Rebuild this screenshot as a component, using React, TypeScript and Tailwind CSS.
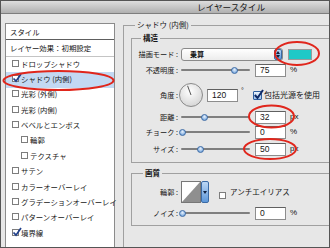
import React from "react";

const effects = [
  { id: 1, label: "ドロップシャドウ" },
  { id: 2, label: "シャドウ (内側)", checked: true, active: true },
  { id: 3, label: "光彩 (外側)" },
  { id: 4, label: "光彩 (内側)" },
  { id: 5, label: "ベベルとエンボス" },
  { id: 6, label: "輪郭", sub: true },
  { id: 7, label: "テクスチャ", sub: true },
  { id: 8, label: "サテン" },
  { id: 9, label: "カラーオーバーレイ" },
  { id: 10, label: "グラデーションオーバーレイ" },
  { id: 11, label: "パターンオーバーレイ" },
  { id: 12, label: "境界線", checked: true },
];

const Check = ({ on }: { on?: boolean }) => (
  <span className="relative inline-block w-[7px] h-[7px] shrink-0 border border-[#7d7d7d] bg-white">
    {on && (
      <svg className="absolute left-[-1px] top-[-3px]" width="10" height="10" viewBox="0 0 10 10">
        <path d="M1.5 5.5 L4 8.2 L9 1" fill="none" stroke="#1f3f8a" strokeWidth="1.7" />
      </svg>
    )}
  </span>
);

const Slider = ({ thumb }: { thumb: string }) => (
  <div className="relative ml-[3px] w-[69px] h-[8px] shrink-0 flex items-center">
    <div className="w-full h-[2px] rounded-full bg-[#7f7f7f]" />
    <div
      className={`absolute top-[0.5px] w-[7px] h-[7px] rounded-full border border-[#3d6ca6] bg-[radial-gradient(circle_at_50%_35%,#eaf3fd,#5a93d4)] ${thumb}`}
    />
  </div>
);

const Field = ({ v, className = "ml-[5px]" }: { v: string; className?: string }) => (
  <div
    className={`w-[31px] h-[13px] shrink-0 border border-[#8d8d8d] border-t-[#606060] bg-white pl-[4px] text-[8.5px] leading-[11px] font-['Liberation_Sans',sans-serif] ${className}`}
  >
    {v}
  </div>
);

const Label = ({ text }: { text: string }) => (
  <div className="w-[46px] shrink-0 text-right text-[7.2px] whitespace-nowrap">{text}</div>
);

const Unit = ({ text }: { text: string }) => (
  <div className="ml-[4px] text-[8px] font-['Liberation_Sans',sans-serif]">{text}</div>
);

const Stepper = ({ both }: { both?: boolean }) => (
  <div className="w-[8px] h-full shrink-0 rounded-[2px] border border-[#3a6aa5] bg-gradient-to-b from-[#bcd7f4] to-[#5d97d8] flex flex-col items-center justify-center gap-[1px]">
    {both && (
      <svg width="4" height="3" viewBox="0 0 4 3">
        <path d="M0 3 L2 0 L4 3Z" fill="#10213f" />
      </svg>
    )}
    <svg width="4" height="3" viewBox="0 0 4 3">
      <path d="M0 0 L2 3 L4 0Z" fill="#10213f" />
    </svg>
  </div>
);

export default function App() {
  return (
    <div className="relative w-[330px] h-[248px] overflow-hidden border border-[#555] bg-[#e7e7e7] text-[#161616] font-['Noto_Sans_CJK_JP','Noto_Sans',sans-serif]">
      <div className="h-[13px] border-b border-[#7e7e7e] bg-gradient-to-b from-[#dedede] to-[#b0b0b0] pl-[196px] text-[8.6px] leading-[12px] whitespace-nowrap">
        レイヤースタイル
      </div>

      <div className="flex items-start">
        {/* style list */}
        <div className="ml-[4px] mt-[9px] w-[110px] h-[240px] shrink-0 border border-[#8b8b8b] bg-white text-[7.4px] whitespace-nowrap">
          <div className="h-[16px] border-b border-[#5e5e5e] pl-[4px] flex items-center">スタイル</div>
          <div className="h-[17px] border-b border-[#c4c4c4] pl-[4px] flex items-center">レイヤー効果：初期設定</div>
          {effects.map((item) => (
            <div
              key={item.id}
              className={`h-[15.36px] pb-[3px] flex items-center gap-[2px] ${item.sub ? "pl-[15px]" : "pl-[6px]"} ${
                item.active ? "bg-[#c3d9f3]" : ""
              }`}
            >
              <Check on={item.checked} />
              <span>{item.label}</span>
            </div>
          ))}
        </div>

        {/* inner shadow settings */}
        <fieldset className="ml-[8px] mt-[6px] w-[230px] h-[240px] shrink-0 min-w-0 border border-[#a0a0a0] pl-[7px] pr-[6px]">
          <legend className="ml-[4px] px-[2px] text-[7.5px] leading-[10px]">シャドウ (内側)</legend>

          <fieldset className="mt-[3px] min-w-0 border border-[#a0a0a0] pb-[7px]">
            <legend className="ml-[9px] px-[2px] text-[7.5px] leading-[10px] font-bold">構造</legend>

            <div className="mt-[4px] h-[14px] flex items-center">
              <Label text="描画モード :" />
              <div className="ml-[3px] w-[102px] h-[13px] shrink-0 flex rounded-[3px] border border-[#8a8a8a] bg-gradient-to-b from-white to-[#ececec]">
                <div className="flex-1 pl-[8px] text-[7px] leading-[11px] font-bold">乗算</div>
                <Stepper both />
              </div>
              <div className="ml-[5px] w-[24px] h-[11px] shrink-0 border border-[#9a9a9a] bg-[#1ec9c7]" />
            </div>

            <div className="mt-[2px] h-[14px] flex items-center">
              <Label text="不透明度 :" />
              <Slider thumb="left-[50px]" />
              <Field v="75" />
              <Unit text="%" />
            </div>

            <div className="mt-[5px] h-[26px] flex items-center">
              <Label text="角度 :" />
              <svg className="ml-[1px] shrink-0" width="24" height="24" viewBox="0 0 24 24">
                <defs>
                  <radialGradient id="dial" cx="45%" cy="35%" r="70%">
                    <stop offset="0" stopColor="#ffffff" />
                    <stop offset="1" stopColor="#d2d2d2" />
                  </radialGradient>
                </defs>
                <circle cx="12" cy="12" r="11.5" fill="url(#dial)" stroke="#8a8a8a" />
                <path d="M12 12 L8.6 2.8" stroke="#555" strokeWidth="1" />
              </svg>
              <Field v="120" className="ml-[4px]" />
              <div className="ml-[3px] w-[6px] self-start mt-[5px] text-[7px] leading-[7px] font-['Liberation_Sans',sans-serif]">°</div>
              <div className="ml-[6px] w-[9px] h-[9px] shrink-0 relative rounded-[1px] border border-[#2f5f9f] bg-gradient-to-b from-[#eef5fd] to-[#9cc1ea]">
                <svg className="absolute left-[-1px] top-[-3px]" width="11" height="11" viewBox="0 0 11 11">
                  <path d="M1.8 6 L4.5 9 L10 1" fill="none" stroke="#0f2a66" strokeWidth="2" />
                </svg>
              </div>
              <div className="ml-[2px] text-[8px] whitespace-nowrap">包括光源を使用</div>
            </div>

            <div className="mt-[3px] h-[12px] flex items-center">
              <Label text="距離 :" />
              <Slider thumb="left-[20px]" />
              <Field v="32" />
              <Unit text="px" />
            </div>

            <div className="mt-[3px] h-[12px] flex items-center">
              <Label text="チョーク :" />
              <Slider thumb="left-[-2px]" />
              <Field v="0" />
              <Unit text="%" />
            </div>

            <div className="mt-[5px] h-[12px] flex items-center">
              <Label text="サイズ :" />
              <Slider thumb="left-[16px]" />
              <Field v="50" />
              <Unit text="px" />
            </div>
          </fieldset>

          <fieldset className="mt-[5px] min-w-0 border border-[#a0a0a0] pb-[6px]">
            <legend className="ml-[11px] px-[2px] text-[7.5px] leading-[10px] font-bold">画質</legend>

            <div className="mt-[3px] h-[22px] flex items-center">
              <Label text="輪郭 :" />
              <div className="ml-[3px] h-[22px] flex shrink-0">
                <svg width="20" height="22" viewBox="0 0 20 22" className="border border-[#777]">
                  <rect width="20" height="22" fill="#fff" />
                  <path d="M0 22 L20 0 L20 22Z" fill="#8f8f8f" />
                </svg>
                <Stepper />
              </div>
              <div className="ml-[10px]">
                <Check />
              </div>
              <div className="ml-[4px] text-[7.5px] whitespace-nowrap">アンチエイリアス</div>
            </div>

            <div className="mt-[4px] h-[12px] flex items-center">
              <Label text="ノイズ :" />
              <Slider thumb="left-[-2px]" />
              <Field v="0" />
              <Unit text="%" />
            </div>
          </fieldset>
        </fieldset>
      </div>

      {/* red annotation marks */}
      <svg className="absolute left-[-1px] top-[-1px] pointer-events-none" width="330" height="248" viewBox="0 0 330 248">
        <g fill="none" stroke="#e0261c" strokeWidth="2">
          <ellipse cx="58.5" cy="80.5" rx="55" ry="9.5" />
          <ellipse cx="297" cy="53.5" rx="22" ry="11.5" />
          <ellipse cx="271.5" cy="116.5" rx="22.5" ry="11" />
          <ellipse cx="270" cy="149" rx="26" ry="10" />
        </g>
      </svg>
    </div>
  );
}
